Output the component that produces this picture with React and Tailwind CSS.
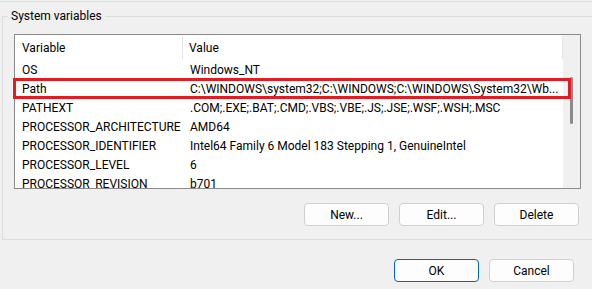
import React from "react"

const rows = [
    ["OS", "Windows_NT"],
    ["Path", "C:\\WINDOWS\\system32;C:\\WINDOWS;C:\\WINDOWS\\System32\\Wb..."],
    ["PATHEXT", ".COM;.EXE;.BAT;.CMD;.VBS;.VBE;.JS;.JSE;.WSF;.WSH;.MSC"],
    ["PROCESSOR_ARCHITECTURE", "AMD64"],
    ["PROCESSOR_IDENTIFIER", "Intel64 Family 6 Model 183 Stepping 1, GenuineIntel"],
    ["PROCESSOR_LEVEL", "6"],
    ["PROCESSOR_REVISION", "b701"],
]

function Btn({ children, primary }) {
    return (
        <button className={`${primary ? "border-[#0067c0]" : "border-[#d0d0d0]"} w-[85px] h-[23px] border rounded-[4px] bg-[#fdfdfd] text-[12px] text-black flex items-center justify-center`}>
            {children}
        </button>
    )
}

export default function App() {
    return (
        <div className="w-[592px] h-[289px] overflow-hidden bg-[#f0f0f0] text-[12px] text-black" style={{ fontFamily: 'Roboto, "Noto Sans", sans-serif' }}>
            <div className="h-px mt-px bg-[#dedede]"></div>

            <fieldset className="relative mt-[6px] ml-[2px] w-[620px] border border-[#dcdcdc] p-0 m-0 min-w-0">
                <legend className="ml-[5px] px-[3px] leading-[16px]">System variables</legend>

                {/* list view */}
                <div className="mt-[10px] ml-[11px] w-[567px] h-[155px] border border-[#8a8a8a] bg-white flex overflow-hidden">
                    <div className="flex-1 flex flex-col min-w-0">
                        <div className="h-[25px] shrink-0 flex items-center">
                            <div className="w-[168px] pl-[7px] h-[23px] flex items-center border-r border-r-[#e5e5e5]">Variable</div>
                            <div className="flex-1 pl-[6px] h-[23px] flex items-center border-r border-r-[#e5e5e5]">Value</div>
                        </div>
                        {rows.map(([name, value]) => (
                            <div key={name} className="h-[19px] shrink-0 flex items-center whitespace-nowrap">
                                <div className="w-[168px] pl-[7px]">{name}</div>
                                <div className="flex-1 pl-[7px] overflow-hidden">{value}</div>
                            </div>
                        ))}
                    </div>
                    <div className="w-[17px] shrink-0 bg-[#f0f0f0] flex justify-center">
                        <div className="w-[3px] h-[47px] mt-[42px] rounded-full bg-[#8b8b8b]"></div>
                    </div>
                </div>

                {/* highlight around Path */}
                <div className="absolute left-[10px] top-[54px] w-[558px] h-[21px] border-[3px] border-[#e31b23]"></div>

                <div className="ml-[11px] w-[565px] mt-[14px] mb-[13px] flex justify-end gap-[10px]">
                    <Btn>New...</Btn>
                    <Btn>Edit...</Btn>
                    <Btn>Delete</Btn>
                </div>
            </fieldset>

            <div className="mt-[19px] pr-[18px] flex justify-end gap-[10px]">
                <Btn primary>OK</Btn>
                <Btn>Cancel</Btn>
            </div>
        </div>
    )
}
